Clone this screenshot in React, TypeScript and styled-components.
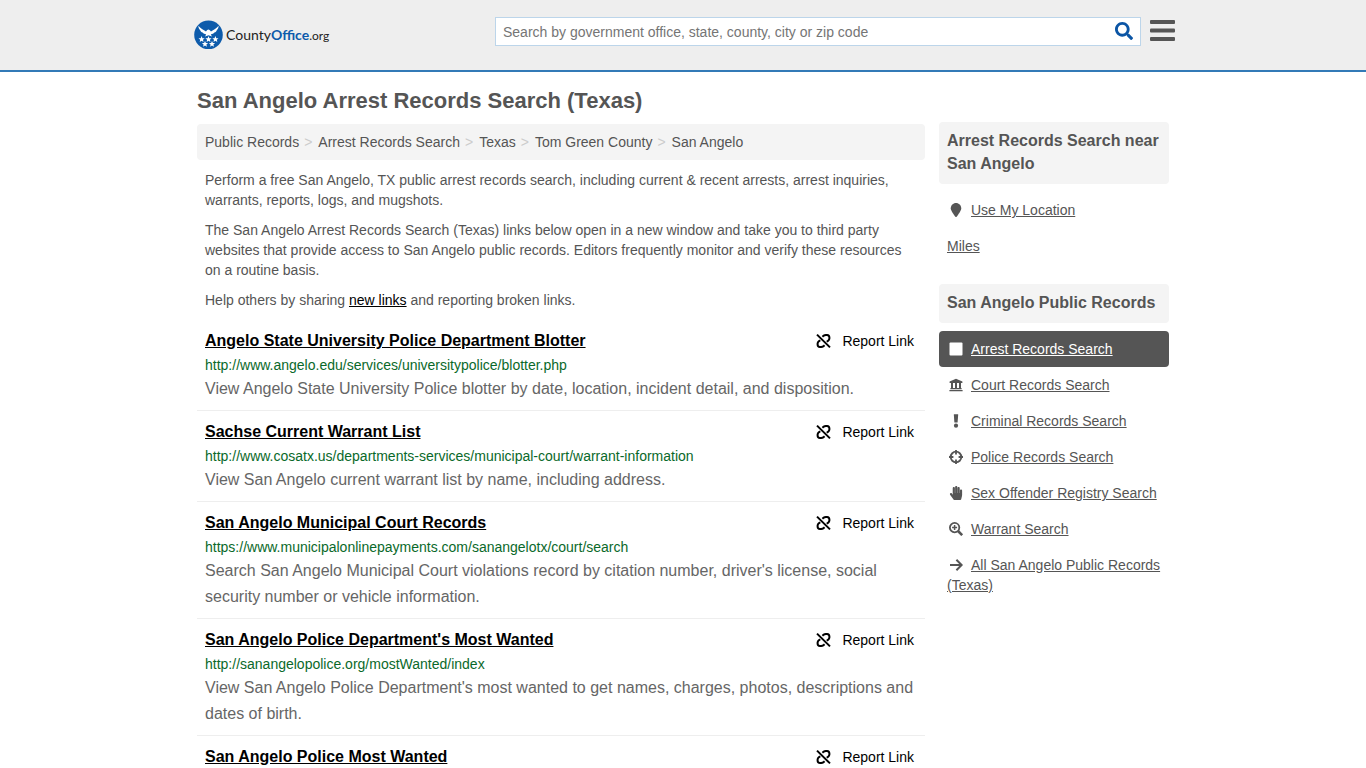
import React from "react";
import styled, { createGlobalStyle, css } from "styled-components";
import { FaLocationPin } from "react-icons/fa6";
import { FaHandPaper, FaSearch } from "react-icons/fa";

const GlobalStyle = createGlobalStyle`
  *, *::before, *::after { box-sizing: border-box; }
  body {
    margin: 0;
    background: #fff;
    color: #555;
    font-family: "Liberation Sans", Arial, sans-serif;
    font-size: 14px;
    line-height: 20px;
  }
  h1, h2, h3, p, ol, ul { margin: 0; padding: 0; }
  ol, ul { list-style: none; }
`;

const Header = styled.header`
  background: #eee;
  border-bottom: 2px solid #337ab7;
`;

const HeaderInner = styled.div`
  display: flex;
  align-items: center;
  max-width: 984px;
  height: 70px;
  margin: 0 auto;
  padding: 0 0 8px 3px;
`;

const LogoLink = styled.a`
  display: flex;
  align-items: center;
  gap: 2px;
  margin: 8px auto 0 0;
  color: #222;
  font-family: Lato, "Liberation Sans", sans-serif;
  font-size: 14px;
  text-decoration: none;
`;

const SearchForm = styled.form`
  display: flex;
  align-items: center;
  flex: 0 1 646px;
  height: 29px;
  background: #fff;
  border: 1px solid #bcd5ea;
`;

const SearchInput = styled.input`
  flex: 1;
  min-width: 0;
  height: 27px;
  padding: 2px 7px 0;
  border: 0;
  background: transparent;
  font: inherit;
  outline: 0;
  &::placeholder { color: #757575; opacity: 1; }
`;

const IconButton = styled.button`
  display: flex;
  padding: 0;
  border: 0;
  background: none;
  cursor: pointer;
`;

const SearchButton = styled(IconButton)`
  margin-right: 7px;
  color: #0b55a5;
`;

const MenuButton = styled(IconButton)`
  margin-left: 9px;
`;

const Page = styled.div`
  display: flex;
  align-items: flex-start;
  gap: 14px;
  max-width: 972px;
  margin: 0 auto;
`;

const Main = styled.main`
  flex: 1;
  min-width: 0;
  padding-top: 17px;
`;

const Title = styled.h1`
  margin-bottom: 11px;
  font-size: 22px;
  line-height: 24px;
`;

const Breadcrumbs = styled.ol`
  display: flex;
  padding: 8px;
  background: #f4f4f4;
  border-radius: 4px;
`;

const Crumb = styled.li`
  a { color: inherit; text-decoration: none; }
  & + &::before {
    content: ">";
    padding: 0 6px 0 5px;
    color: #ccc;
  }
`;

const Intro = styled.div`
  padding: 10px 8px;
  p + p { margin-top: 10px; }
  a { color: #000; }
`;

const Record = styled.li`
  padding: 9px 8px 8px;
  border-bottom: 1px solid #eee;
  &:last-child { padding-bottom: 0; border-bottom: 0; }
`;

const RecordHead = styled.div`
  display: flex;
  justify-content: space-between;
  align-items: center;
`;

const RecordTitle = styled.h2`
  font-size: 16px;
  line-height: 24px;
  a { color: #000; }
`;

const ReportButton = styled.button`
  display: flex;
  align-items: center;
  gap: 11px;
  padding: 0 3px 0 0;
  border: 0;
  background: none;
  color: #000;
  font: inherit;
  cursor: pointer;
`;

const RecordUrl = styled.p`
  margin: 2px 0 1px;
  color: #0a692a;
`;

const RecordText = styled.p`
  color: #666;
  font-size: 16px;
  line-height: 26px;
`;

const Sidebar = styled.aside`
  width: 230px;
  padding-top: 50px;
`;

const SideSection = styled.section`
  margin-bottom: 20px;
`;

const SideHeading = styled.h3`
  margin-bottom: 8px;
  padding: 7px 8px 9px;
  background: #f4f4f4;
  border-radius: 4px;
  font-size: 16px;
  line-height: 23px;
`;

const SideLink = styled.a<{ $active?: boolean }>`
  display: block;
  padding: 8px;
  border-radius: 4px;
  color: #555;
  ${(p) => p.$active && css`background: #555; color: #fff;`}
  svg {
    width: 18px;
    height: 14px;
    margin-right: 6px;
    vertical-align: -2px;
  }
`;

const Eagle = () => (
  <svg width="30" height="30" viewBox="0 0 30 30" aria-hidden="true">
    <circle cx="14.5" cy="14.8" r="14.3" fill="#0d5bab" />
    <g fill="#fff">
      <path d="M4.4 5.8 C6.4 8.4 9.4 10 12 11.4 L13.2 10 L14.4 9.4 L15.6 10 L17 11.4 C19.6 10 22.6 8.4 24.6 5.8 C24.6 7.8 24 9.2 22.8 10.2 C22.4 11.4 21.6 12.2 20.4 12.6 C19.6 13.6 18.4 14.2 16.8 14.4 L18 16.6 L14.5 15.2 L11 16.6 L12.2 14.4 C10.6 14.2 9.4 13.6 8.6 12.6 C7.4 12.2 6.6 11.4 6.2 10.2 C5 9.2 4.4 7.8 4.4 5.8Z" />
      {[[7.6, 19.2], [14.5, 19.2], [21.4, 19.2], [11, 24], [18, 24]].map(([x, y]) => (
        <path
          key={`${x}-${y}`}
          transform={`translate(${x} ${y})`}
          d="M0 -3.1 L0.9 -1 L3.1 -0.9 L1.4 0.6 L1.9 2.7 L0 1.5 L-1.9 2.7 L-1.4 0.6 L-3.1 -0.9 L-0.9 -1Z"
        />
      ))}
    </g>
  </svg>
);

const Wordmark = styled.span`
  b { color: #0d5bab; }
`;

const Suffix = styled.span`
  font-size: 12px;
`;

const UnlinkIcon = () => (
  <svg width="16" height="16" viewBox="0 0 16 16" fill="none" stroke="#000" strokeWidth="2" aria-hidden="true">
    <path d="M2 1.6 L15 14.4" />
    <path d="M7.4 3.8 L8.8 2.6 Q9.6 2 10.8 2 H12 Q14.4 2.2 14.4 4.6 V5.4 Q14.3 6.6 13.4 7.4 L11.8 8.8" />
    <path d="M9.6 12.2 L8.2 13.4 Q7.4 14 6.2 14 H5 Q2.6 13.8 2.6 11.4 V10.6 Q2.7 9.4 3.6 8.6 L5.2 7.2" />
  </svg>
);

const MenuIcon = () => (
  <svg width="25" height="23" viewBox="0 0 25 23" fill="#555" aria-hidden="true">
    <rect width="25" height="4" rx="1" />
    <rect y="8.5" width="25" height="4" rx="1" />
    <rect y="17" width="25" height="4" rx="1" />
  </svg>
);

const SquareIcon = () => (
  <svg viewBox="0 0 14 14" fill="currentColor" aria-hidden="true">
    <rect x="0.5" y="0.5" width="13" height="13" rx="1" />
  </svg>
);

const CourtIcon = () => (
  <svg viewBox="0 0 14 14" fill="currentColor" aria-hidden="true">
    <path d="M7 0.8 L13.4 3.6 V5 H0.6 V3.6Z M2 5 H4 V10.4 H2Z M6 5 H8 V10.4 H6Z M10 5 H12 V10.4 H10Z M1.4 10 H12.6 V11.2 H1.4Z M0.4 11.9 H13.6 V13.2 H0.4Z" />
  </svg>
);

const ExclamationIcon = () => (
  <svg viewBox="0 0 14 14" fill="currentColor" aria-hidden="true">
    <path d="M4.8 0.6 Q4.8 0.2 5.2 0.2 H8.8 Q9.2 0.2 9.2 0.6 L8.6 8.6 H5.4Z" />
    <circle cx="7" cy="11.7" r="2.1" />
  </svg>
);

const TargetIcon = () => (
  <svg viewBox="0 0 14 14" fill="none" stroke="currentColor" strokeWidth="1.8" aria-hidden="true">
    <circle cx="7" cy="7" r="5.3" />
    <path d="M7 0 V4.4 M7 9.6 V14 M0 7 H4.4 M9.6 7 H14" />
  </svg>
);

const ZoomInIcon = () => (
  <svg viewBox="0 0 14 14" fill="none" stroke="currentColor" aria-hidden="true">
    <circle cx="5.6" cy="5.6" r="4.7" strokeWidth="1.8" />
    <path d="M9 9 L13.2 13.2" strokeWidth="2.5" />
    <path d="M5.6 3.1 V8.1 M3.1 5.6 H8.1" strokeWidth="1.5" />
  </svg>
);

const ArrowIcon = () => (
  <svg viewBox="0 0 14 14" fill="none" stroke="currentColor" strokeWidth="2" aria-hidden="true">
    <path d="M1 7 H12.4 M7.4 1.8 L12.6 7 L7.4 12.2" />
  </svg>
);

const crumbs = ["Public Records", "Arrest Records Search", "Texas", "Tom Green County", "San Angelo"];

const records = [
  {
    title: "Angelo State University Police Department Blotter",
    url: "http://www.angelo.edu/services/universitypolice/blotter.php",
    text: "View Angelo State University Police blotter by date, location, incident detail, and disposition.",
  },
  {
    title: "Sachse Current Warrant List",
    url: "http://www.cosatx.us/departments-services/municipal-court/warrant-information",
    text: "View San Angelo current warrant list by name, including address.",
  },
  {
    title: "San Angelo Municipal Court Records",
    url: "https://www.municipalonlinepayments.com/sanangelotx/court/search",
    text: "Search San Angelo Municipal Court violations record by citation number, driver's license, social security number or vehicle information.",
  },
  {
    title: "San Angelo Police Department's Most Wanted",
    url: "http://sanangelopolice.org/mostWanted/index",
    text: "View San Angelo Police Department's most wanted to get names, charges, photos, descriptions and dates of birth.",
  },
  { title: "San Angelo Police Most Wanted" },
];

const categories = [
  { label: "Arrest Records Search", Icon: SquareIcon, active: true },
  { label: "Court Records Search", Icon: CourtIcon },
  { label: "Criminal Records Search", Icon: ExclamationIcon },
  { label: "Police Records Search", Icon: TargetIcon },
  { label: "Sex Offender Registry Search", Icon: FaHandPaper },
  { label: "Warrant Search", Icon: ZoomInIcon },
  { label: "All San Angelo Public Records (Texas)", Icon: ArrowIcon },
];

export default function App() {
  return (
    <>
      <GlobalStyle />
      <Header>
        <HeaderInner>
          <LogoLink href="#">
            <Eagle />
            <Wordmark>County<b>Office</b><Suffix>.org</Suffix></Wordmark>
          </LogoLink>
          <SearchForm role="search">
            <SearchInput
              type="text"
              aria-label="Search"
              placeholder="Search by government office, state, county, city or zip code"
            />
            <SearchButton type="submit" aria-label="Search">
              <FaSearch size={18} />
            </SearchButton>
          </SearchForm>
          <MenuButton type="button" aria-label="Menu">
            <MenuIcon />
          </MenuButton>
        </HeaderInner>
      </Header>
      <Page>
        <Main>
          <Title>San Angelo Arrest Records Search (Texas)</Title>
          <Breadcrumbs>
            {crumbs.map((c) => (
              <Crumb key={c}><a href="#">{c}</a></Crumb>
            ))}
          </Breadcrumbs>
          <Intro>
            <p>
              Perform a free San Angelo, TX public arrest records search, including current &amp; recent
              arrests, arrest inquiries, warrants, reports, logs, and mugshots.
            </p>
            <p>
              The San Angelo Arrest Records Search (Texas) links below open in a new window and take you to
              third party websites that provide access to San Angelo public records. Editors frequently
              monitor and verify these resources on a routine basis.
            </p>
            <p>
              Help others by sharing <a href="#">new links</a> and reporting broken links.
            </p>
          </Intro>
          <ul>
            {records.map((r) => (
              <Record key={r.title}>
                <RecordHead>
                  <RecordTitle><a href="#">{r.title}</a></RecordTitle>
                  <ReportButton type="button">
                    <UnlinkIcon />
                    Report Link
                  </ReportButton>
                </RecordHead>
                {r.url && <RecordUrl>{r.url}</RecordUrl>}
                {r.text && <RecordText>{r.text}</RecordText>}
              </Record>
            ))}
          </ul>
        </Main>
        <Sidebar>
          <SideSection>
            <SideHeading>Arrest Records Search near San Angelo</SideHeading>
            <SideLink href="#"><FaLocationPin />Use My Location</SideLink>
            <SideLink href="#">Miles</SideLink>
          </SideSection>
          <SideSection>
            <SideHeading>San Angelo Public Records</SideHeading>
            {categories.map(({ label, Icon, active }) => (
              <SideLink key={label} href="#" $active={active}>
                <Icon />
                {label}
              </SideLink>
            ))}
          </SideSection>
        </Sidebar>
      </Page>
    </>
  );
}
